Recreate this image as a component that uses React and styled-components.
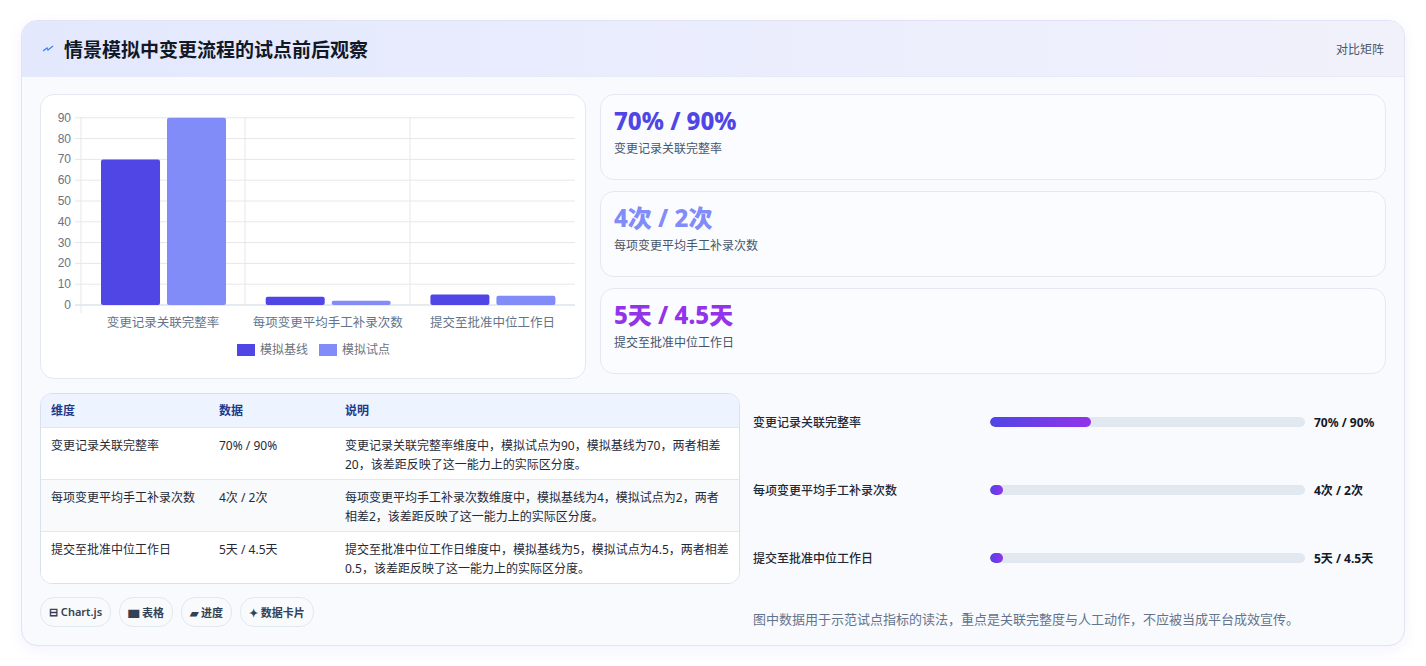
import React from "react";
import styled, { createGlobalStyle } from "styled-components";

const Global = createGlobalStyle`
  body { margin: 0; background: #fff; font-family: "Noto Sans", "Noto Sans CJK SC", sans-serif; color: #1e293b; }
`;

const Page = styled.div`
  padding: 20px 21px 20px 21px;
`;

const Card = styled.div`
  border: 1px solid #dfe3f3;
  border-radius: 16px;
  overflow: hidden;
  background: #f9fafe;
  box-shadow: 0 4px 14px rgba(99, 102, 241, 0.08);
`;

const Header = styled.div`
  height: 55px;
  display: flex;
  align-items: center;
  justify-content: space-between;
  padding: 0 20px;
  background: linear-gradient(90deg, #e3e8fd, #eceefd 60%, #f1f1fb);
  border-bottom: 1px solid #e6e9f7;
`;

const Title = styled.h1`
  margin: 0;
  font-size: 19px;
  font-weight: 700;
  color: #111827;
  display: flex;
  align-items: center;
  gap: 10px;
`;

const HeaderTag = styled.span`
  font-size: 12px;
  color: #475569;
`;

const Body = styled.div`
  padding: 17px 18px 17px 18px;
  display: flex;
  flex-direction: column;
  gap: 14px;
`;

const Row = styled.div`
  display: grid;
  grid-template-columns: ${(p) => p.cols};
  gap: ${(p) => p.gap || "14px"};
`;

const Panel = styled.div`
  background: #fff;
  border: 1px solid #e3e8f2;
  border-radius: 14px;
`;

const ChartPanel = styled(Panel)`
  height: 283px;
  overflow: hidden;
`;

const Stats = styled.div`
  display: flex;
  flex-direction: column;
  gap: 11px;
`;

const Stat = styled(Panel)`
  height: 86px;
  box-sizing: border-box;
  padding: 10px 13px;
  background: #fbfcff;
`;

const StatValue = styled.div`
  font-size: 24px;
  font-weight: 800;
  color: ${(p) => p.color};
  line-height: 32px;
`;

const StatLabel = styled.div`
  font-size: 12px;
  color: #475569;
  margin-top: 2px;
`;

const Table = styled.div`
  border: 1px solid #d9e0ee;
  border-radius: 12px;
  overflow: hidden;
  background: #fff;
`;

const TRow = styled.div`
  display: grid;
  grid-template-columns: 168px 126px 1fr;
  padding: 0 10px;
  font-size: 12px;
  line-height: 19px;
  background: ${(p) => (p.head ? "#eef4ff" : p.alt ? "#f8fafc" : "#fff")};
  color: ${(p) => (p.head ? "#1e3a8a" : "#1f2937")};
  font-weight: ${(p) => (p.head ? 600 : 400)};
  border-top: ${(p) => (p.first ? "none" : "1px solid #e2e8f0")};
  height: ${(p) => (p.head ? "33px" : "52px")};
  align-items: ${(p) => (p.head ? "center" : "start")};
  padding-top: ${(p) => (p.head ? "0" : "8px")};
  box-sizing: border-box;
`;

const Chips = styled.div`
  display: flex;
  gap: 8px;
  margin-top: 13px;
`;

const Chip = styled.span`
  font-size: 11px;
  font-weight: 600;
  color: #334155;
  border: 1px solid #e2e8f0;
  background: #f8fafc;
  border-radius: 14px;
  padding: 6px 8px;
`;

const Progress = styled.div`
  display: flex;
  flex-direction: column;
  padding: 12px 0 0 0;
`;

const PRow = styled.div`
  display: grid;
  grid-template-columns: 237px 1fr 72px;
  align-items: center;
  height: 34px;
  margin-bottom: 34px;
  font-size: 12px;
  font-weight: 500;
  color: #1f2937;
`;

const Track = styled.div`
  height: 10px;
  border-radius: 5px;
  background: #e2e8f0;
  margin-right: 9px;
  overflow: hidden;
`;

const Fill = styled.div`
  height: 100%;
  border-radius: 5px;
  background: linear-gradient(90deg, #4f46e5, #9333ea);
`;

const PValue = styled.span`
  font-weight: 700;
  color: #111827;
`;

const Note = styled.p`
  margin: 0;
  font-size: 13px;
  color: #64748b;
`;

const base = "#4f46e5";
const pilot = "#818cf8";

function Chart() {
  const y0 = 210, unit = 20.8 / 10;
  const ticks = [0, 10, 20, 30, 40, 50, 60, 70, 80, 90];
  const groups = [
    { label: "变更记录关联完整率", a: 70, b: 90 },
    { label: "每项变更平均手工补录次数", a: 4, b: 2 },
    { label: "提交至批准中位工作日", a: 5, b: 4.5 },
  ];
  return (
    <svg width="546" height="283" style={{ fontFamily: "Liberation Sans, Noto Sans CJK SC, sans-serif" }}>
      {ticks.map((t) => (
        <g key={t}>
          <line x1="34" x2="534" y1={y0 - t * unit} y2={y0 - t * unit} stroke={t === 0 ? "#cbd5e1" : "#e5e7eb"} />
          <text x="30" y={y0 - t * unit + 4} fontSize="12" fill="#6b7280" textAnchor="end">{t}</text>
        </g>
      ))}
      {[40, 204, 369].map((x) => (
        <line key={x} x1={x} x2={x} y1={22} y2={x === 40 ? 218 : 210} stroke="#e5e7eb" />
      ))}
      {groups.map((g, i) => {
        const gx = 40 + i * 164.7;
        return (
          <g key={g.label}>
            <rect x={gx + 20} y={y0 - g.a * unit} width="59" height={g.a * unit} rx="2" fill={base} />
            <rect x={gx + 86} y={y0 - g.b * unit} width="59" height={g.b * unit} rx="2" fill={pilot} />
            <text x={gx + 82} y="232" fontSize="12.5" fill="#64748b" textAnchor="middle">{g.label}</text>
          </g>
        );
      })}
      <rect x="196" y="249" width="18" height="12" fill={base} />
      <text x="219" y="259" fontSize="12" fill="#6b7280">模拟基线</text>
      <rect x="278" y="249" width="18" height="12" fill={pilot} />
      <text x="301" y="259" fontSize="12" fill="#6b7280">模拟试点</text>
    </svg>
  );
}

const rows = [
  ["变更记录关联完整率", "70% / 90%", "变更记录关联完整率维度中，模拟试点为90，模拟基线为70，两者相差20，该差距反映了这一能力上的实际区分度。"],
  ["每项变更平均手工补录次数", "4次 / 2次", "每项变更平均手工补录次数维度中，模拟基线为4，模拟试点为2，两者相差2，该差距反映了这一能力上的实际区分度。"],
  ["提交至批准中位工作日", "5天 / 4.5天", "提交至批准中位工作日维度中，模拟基线为5，模拟试点为4.5，两者相差0.5，该差距反映了这一能力上的实际区分度。"],
];

const bars = [
  { label: "变更记录关联完整率", pct: 32, v: "70% / 90%" },
  { label: "每项变更平均手工补录次数", pct: 4, v: "4次 / 2次" },
  { label: "提交至批准中位工作日", pct: 4, v: "5天 / 4.5天" },
];

export default function App() {
  return (
    <Page>
      <Global />
      <Card>
        <Header>
          <Title>
            <svg width="12" height="12" viewBox="0 0 12 12">
              <path d="M1 8 L5 5 L6 7 L11 3" stroke="#3b82f6" strokeWidth="1.3" fill="none" />
            </svg>
            情景模拟中变更流程的试点前后观察
          </Title>
          <HeaderTag>对比矩阵</HeaderTag>
        </Header>
        <Body>
          <Row cols="546px 1fr">
            <ChartPanel><Chart /></ChartPanel>
            <Stats>
              <Stat><StatValue color="#4f46e5">70% / 90%</StatValue><StatLabel>变更记录关联完整率</StatLabel></Stat>
              <Stat><StatValue color="#818cf8">4次 / 2次</StatValue><StatLabel>每项变更平均手工补录次数</StatLabel></Stat>
              <Stat><StatValue color="#9333ea">5天 / 4.5天</StatValue><StatLabel>提交至批准中位工作日</StatLabel></Stat>
            </Stats>
          </Row>
          <Row cols="700px 1fr" gap="13px">
            <div>
              <Table>
                <TRow head first><span>维度</span><span>数据</span><span>说明</span></TRow>
                {rows.map((r, i) => (
                  <TRow key={i} alt={i === 1}>
                    <span>{r[0]}</span><span>{r[1]}</span><span>{r[2]}</span>
                  </TRow>
                ))}
              </Table>
              <Chips>
                <Chip>⊟ Chart.js</Chip>
                <Chip>▆ 表格</Chip>
                <Chip>▰ 进度</Chip>
                <Chip>✦ 数据卡片</Chip>
              </Chips>
            </div>
            <Progress>
              {bars.map((b) => (
                <PRow key={b.label}>
                  <span>{b.label}</span>
                  <Track><Fill style={{ width: `${b.pct}%` }} /></Track>
                  <PValue>{b.v}</PValue>
                </PRow>
              ))}
              <Note>图中数据用于示范试点指标的读法，重点是关联完整度与人工动作，不应被当成平台成效宣传。</Note>
            </Progress>
          </Row>
        </Body>
      </Card>
    </Page>
  );
}
